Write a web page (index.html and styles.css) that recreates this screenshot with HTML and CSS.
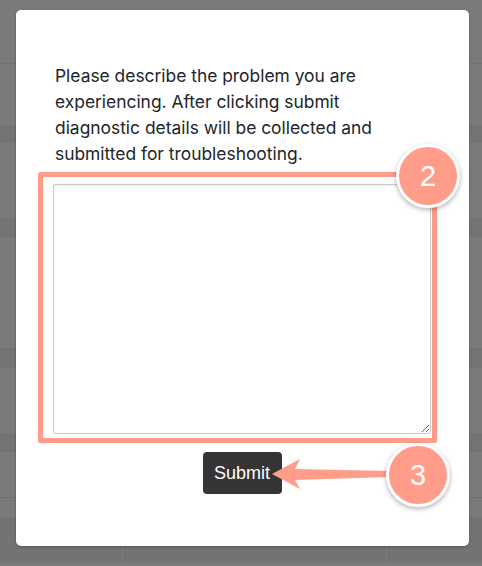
FILE: index.html
```html
<!DOCTYPE html>
<html>
<head>
<meta charset="utf-8">
<link rel="stylesheet" href="styles.css">
</head>
<body>
<div class="page">
  <div class="row r1"></div>
  <div class="row r2"></div>
  <div class="row band b1"></div>
  <div class="row r3"></div>
  <div class="row band b2"></div>
  <div class="row r4"></div>
  <div class="row band b3"></div>
  <div class="row r5"></div>
  <div class="row band b4"></div>
  <div class="row r6"></div>
  <div class="row r7"></div>
  <div class="row foot"><div class="cell c1"></div><div class="cell c2"></div><div class="cell c3"></div></div>
</div>

<div class="overlay">
  <div class="modal">
    <p class="desc">Please describe the problem you are experiencing. After clicking submit diagnostic details will be collected and submitted for troubleshooting.</p>
    <textarea class="field"></textarea>
    <div class="actions"><button class="submit">Submit</button></div>
  </div>

  <div class="highlight"></div>
  <div class="badge badge-2">2</div>
  <svg class="arrow" width="482" height="566" viewBox="0 0 482 566">
    <polygon points="272,474 300,459 295,469 390,471 390,477 295,480 300,489" fill="#ff9c8a"/>
  </svg>
  <div class="badge badge-3">3</div>
</div>
</body>
</html>
```

FILE: styles.css
```css
html, body {
  margin: 0;
  padding: 0;
  width: 482px;
  height: 566px;
  overflow: hidden;
  background: #7a7a7a;
}

.page {
  display: flex;
  flex-direction: column;
  width: 482px;
  height: 566px;
}

.row { flex: none; }
.r1 { height: 63px; border-bottom: 1px solid #727272; }
.r2 { height: 61px; }
.band { background: #747474; }
.b1 { height: 18px; }
.r3 { height: 75px; }
.b2 { height: 19px; }
.r4 { height: 111px; }
.b3 { height: 20px; }
.r5 { height: 65px; }
.b4 { height: 19px; }
.r6 { height: 45px; border-bottom: 1px solid #717171; }
.r7 { height: 19px; }
.foot {
  height: 45px;
  background: #737373;
  display: flex;
}
.cell { height: 100%; }
.c1 { width: 122px; border-right: 1px solid #7c7c7c; }
.c2 { width: 263px; border-right: 1px solid #7c7c7c; }
.c3 { flex: 1; }

.overlay {
  position: absolute;
  left: 0;
  top: 0;
  width: 482px;
  height: 566px;
}

.modal {
  position: absolute;
  left: 16px;
  top: 10px;
  width: 453px;
  height: 536px;
  box-sizing: border-box;
  background: #fff;
  border-radius: 5px;
  box-shadow: 0 1px 3px rgba(0,0,0,0.25);
  padding: 53px 38px 0 37px;
  display: flex;
  flex-direction: column;
}

.desc {
  margin: 0;
  padding-left: 2px;
  width: 345px;
  font-family: Inter, "Noto Sans", sans-serif;
  font-size: 17.4px;
  line-height: 26px;
  color: #222529;
}

.field {
  margin-top: 17px;
  width: 378px;
  height: 250px;
  box-sizing: border-box;
  border: 1px solid #c9c9c9;
  border-radius: 2px;
  box-shadow: inset 0 1px 2px rgba(0,0,0,0.06);
  resize: both;
  font-family: Inter, sans-serif;
}

.actions {
  margin-top: 18px;
  display: flex;
  justify-content: center;
}

.submit {
  width: 79px;
  height: 42px;
  border: none;
  border-radius: 4px;
  background: #353535;
  color: #fff;
  font-family: "Liberation Sans", Arial, sans-serif;
  font-size: 18px;
  padding: 0;
}

.highlight {
  position: absolute;
  left: 38px;
  top: 172px;
  width: 399px;
  height: 271px;
  box-sizing: border-box;
  border: 5px solid #ff9c8a;
  border-radius: 2px;
}

.badge {
  position: absolute;
  width: 58px;
  height: 58px;
  border-radius: 50%;
  background: #ff9c8a;
  border: 3px solid #fff;
  box-shadow: 0 2px 5px rgba(0,0,0,0.3);
  color: #fff;
  font-family: "Liberation Sans", Arial, sans-serif;
  font-size: 29px;
  display: flex;
  align-items: center;
  justify-content: center;
}
.badge-2 { left: 396px; top: 144px; }
.badge-3 { left: 386px; top: 443px; }

.arrow {
  position: absolute;
  left: 0;
  top: 0;
}
```
